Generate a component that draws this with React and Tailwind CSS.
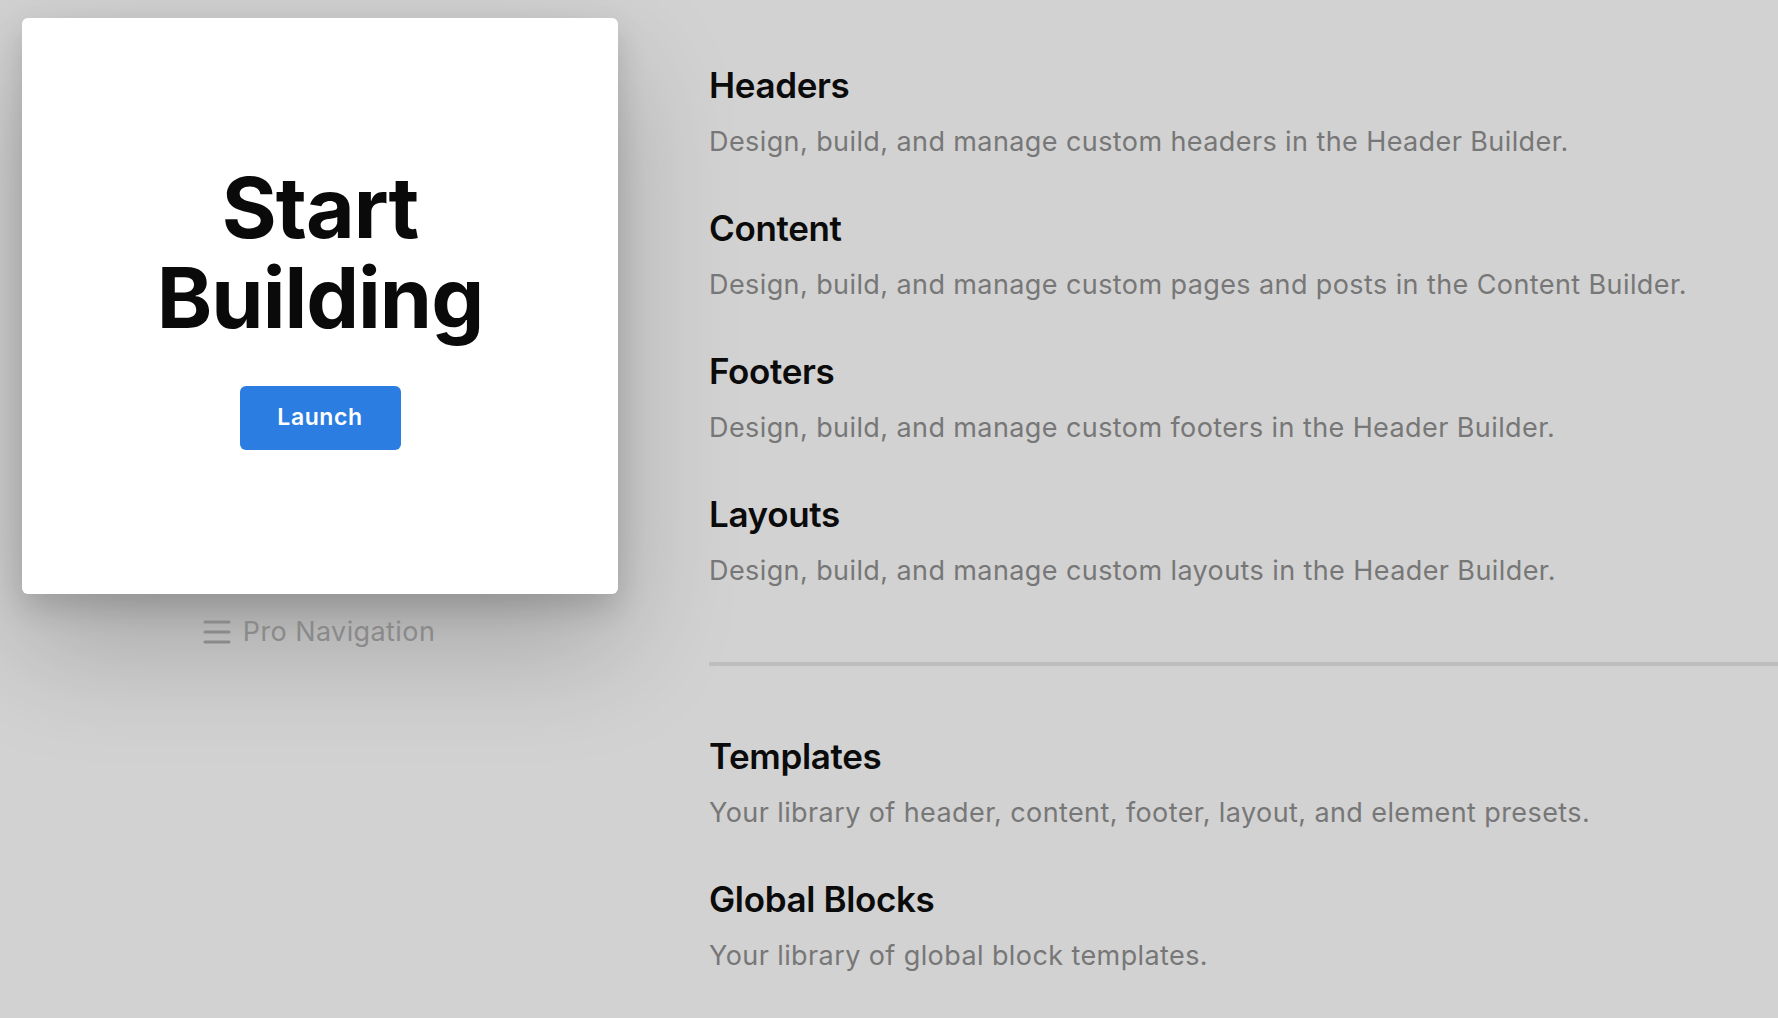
import React from 'react';

const sections = [
  { title: 'Headers', text: 'Design, build, and manage custom headers in the Header Builder.' },
  { title: 'Content', text: 'Design, build, and manage custom pages and posts in the Content Builder.' },
  { title: 'Footers', text: 'Design, build, and manage custom footers in the Header Builder.' },
  { title: 'Layouts', text: 'Design, build, and manage custom layouts in the Header Builder.' },
];

const libraries = [
  { title: 'Templates', text: 'Your library of header, content, footer, layout, and element presets.' },
  { title: 'Global Blocks', text: 'Your library of global block templates.' },
];

const Section = ({ title, text, first }) => (
  <div className={first ? '' : 'mt-[50px]'}>
    <h2 className="text-[35px] leading-[40px] font-semibold text-[#0b0b0b] tracking-[-0.01em]">{title}</h2>
    <p className="mt-[21px] text-[27px] leading-[32px] text-[#777777] tracking-[0.015em]">{text}</p>
  </div>
);

const MenuIcon = () => (
  <svg width="28" height="24" viewBox="0 0 28 24" fill="none" stroke="#8a8a8a" strokeWidth="3" strokeLinecap="round">
    <path d="M2 2h24" />
    <path d="M2 12h24" />
    <path d="M2 22h24" />
  </svg>
);

const App = () => {
  return (
    <div className="min-h-screen w-full bg-[#d2d2d2] flex overflow-hidden" style={{ fontFamily: 'Inter, "Noto Sans", sans-serif' }}>
      {/* left: launcher card */}
      <div className="pl-[22px] pt-[18px] shrink-0">
        <div className="w-[596px] h-[576px] bg-white rounded-md shadow-[0_50px_120px_rgba(0,0,0,0.22),0_14px_30px_rgba(0,0,0,0.14)] flex flex-col items-center justify-center">
          <h1 className="text-[84px] leading-[90px] font-bold text-[#0a0a0a] text-center tracking-[-0.012em]">
            Start
            <br />
            Building
          </h1>
          <button className="mt-[43px] w-[161px] h-[64px] rounded-md bg-[#2b7de1] text-white text-[23px] font-semibold tracking-[0.025em]">
            Launch
          </button>
        </div>
        <div className="mt-[22px] flex items-center justify-center gap-[12px] pr-[2px]">
          <MenuIcon />
          <span className="text-[27px] leading-[32px] text-[#8a8a8a] tracking-[0.015em]">Pro Navigation</span>
        </div>
      </div>

      {/* right: builders list */}
      <div className="ml-[91px] flex-1 pt-[65px]">
        {sections.map((s, i) => (
          <Section key={s.title} {...s} first={i === 0} />
        ))}
        <div className="mt-[75px] h-[4px] bg-[#bdbdbd] w-full" />
        <div className="mt-[70px]">
          {libraries.map((s, i) => (
            <Section key={s.title} {...s} first={i === 0} />
          ))}
        </div>
      </div>
    </div>
  );
};

export default App;
